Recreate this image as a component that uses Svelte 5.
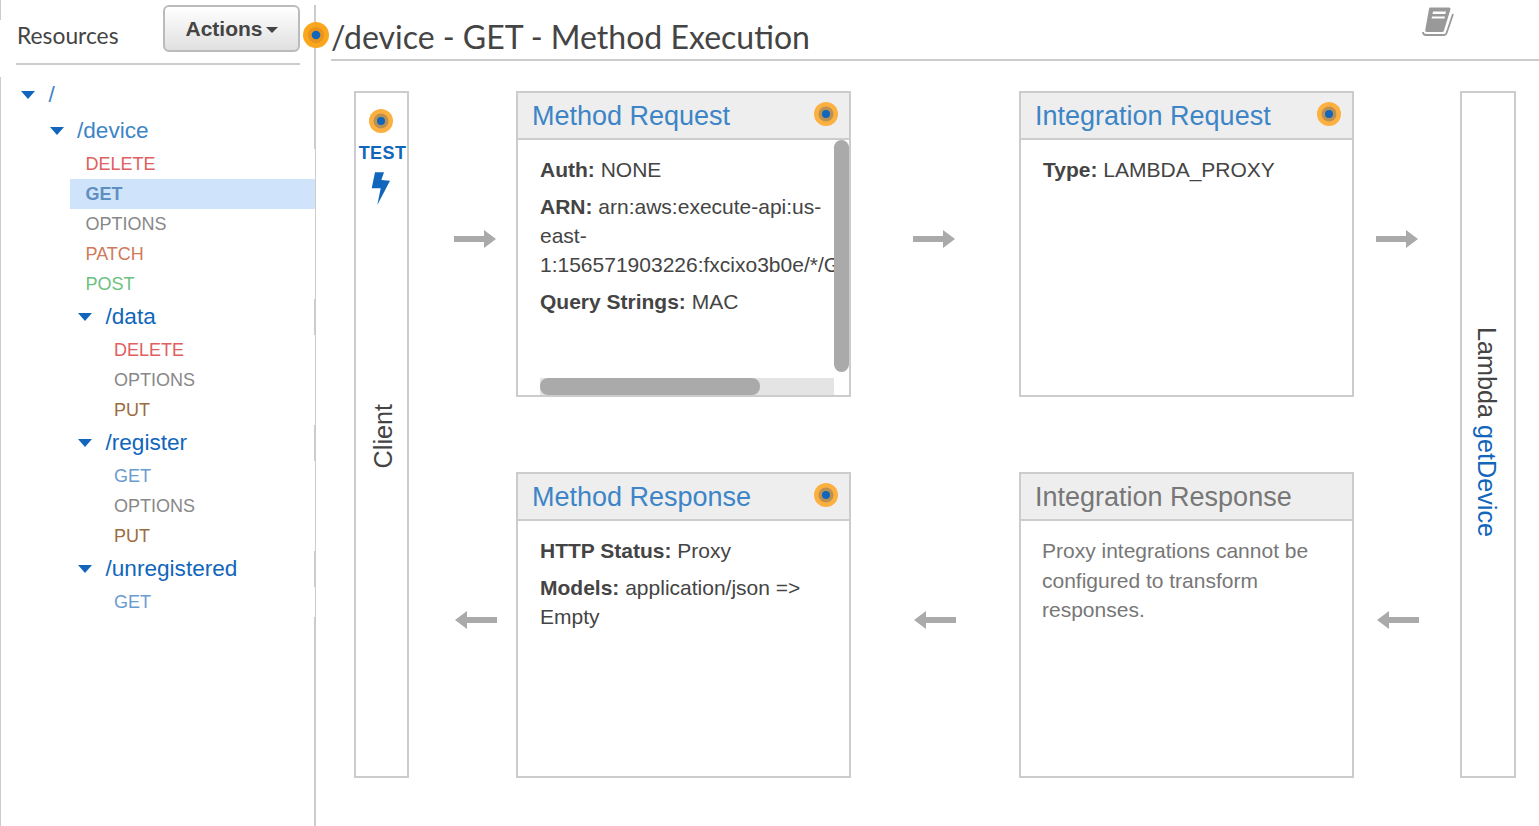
<script>
    const tree = {
        path: "/", light: true,
        children: [{
            path: "/device", light: true,
            methods: [
                { name: "DELETE" },
                { name: "GET", selected: true },
                { name: "OPTIONS" },
                { name: "PATCH" },
                { name: "POST" }
            ],
            children: [
                { path: "/data", methods: [{ name: "DELETE" }, { name: "OPTIONS" }, { name: "PUT" }] },
                { path: "/register", methods: [{ name: "GET" }, { name: "OPTIONS" }, { name: "PUT" }] },
                { path: "/unregistered", methods: [{ name: "GET" }] }
            ]
        }]
    }
</script>

{#snippet dot(size, hot = false)}
    <svg class="dot" width={size} height={size} viewBox="0 0 24 24">
        <circle cx="12" cy="12" r="12" fill={hot ? "#fba61f" : "#fbb040"} />
        <circle cx="12" cy="12" r="7.5" fill={hot ? "#e8951e" : "#bb9153"} />
        <circle cx="12" cy="12" r="4" fill="#1166bb" />
    </svg>
{/snippet}

{#snippet arrow(left)}
    <svg class="arrow" class:left width="42" height="18" viewBox="0 0 42 18">
        <path d="M0 6H30V0L42 9L30 18V12H0Z" fill="#aaa" />
    </svg>
{/snippet}

{#snippet resource(node)}
    <li>
        <div class="node" class:light={node.light}>
            <svg class="caret" width="14" height="8" viewBox="0 0 14 8"><path d="M0 0H14L7 8Z" fill="#1166bb" /></svg>
            <span>{node.path}</span>
        </div>
        <ul class="nested">
            {#each node.methods ?? [] as m}
                <li class="method {m.name.toLowerCase()}" class:selected={m.selected}>{m.name}</li>
            {/each}
            {#each node.children ?? [] as child}
                {@render resource(child)}
            {/each}
        </ul>
    </li>
{/snippet}

<div class="page">
    <aside class="sidebar">
        <header class="side-head">
            <span class="side-title">Resources</span>
            <button class="actions">Actions<i class="btn-caret"></i></button>
        </header>
        <ul class="tree">
            {@render resource(tree)}
        </ul>
    </aside>

    <div class="head-dot">{@render dot(26, true)}</div>

    <main class="main">
        <header class="main-head">
            <h1>/device - GET - Method Execution</h1>
            <svg class="book" width="32" height="30" viewBox="0 0 32 30">
                <path d="M8 1.5H27Q29 1.5 28.4 3.5L22 24.5Q21.6 26 20 26H5Q2.5 26 3.5 22.5L7 3Q7.2 1.5 8 1.5Z" fill="#999" />
                <path d="M11 5.5H24L23.4 8H10.5ZM10 10.5H23L22.4 12.6H9.6Z" fill="#fff" />
                <path d="M31 8L24.6 27Q24 29 22 29H4Q1 29 1 26" fill="none" stroke="#999" stroke-width="1.8" />
            </svg>
        </header>

        <div class="diagram">
            <section class="side-box client">
                <div class="test">
                    {@render dot(24)}
                    <span class="test-label">TEST</span>
                    <svg class="bolt" width="20" height="35" viewBox="0 0 20 35">
                        <path d="M4 1.3H13L10.3 9L19 9.7L6.3 34L9.7 17.3H0.7Z" fill="#1166bb" />
                    </svg>
                </div>
                <span class="vert client-label">Client</span>
            </section>

            <div class="gap g1">{@render arrow(false)}</div>

            <section class="card">
                <div class="card-head">
                    <span class="card-title">Method Request</span>
                    {@render dot(24)}
                </div>
                <div class="card-body scroll">
                    <div class="scroll-content">
                        <p><b>Auth:</b> NONE</p>
                        <p><b>ARN:</b> arn:aws:execute-api:us-east-1:156571903226:fxcixo3b0e/*/GET/device</p>
                        <p><b>Query Strings:</b> MAC</p>
                    </div>
                    <div class="track-h"><div class="thumb-h"></div></div>
                    <div class="thumb-v"></div>
                </div>
            </section>

            <div class="gap g2">{@render arrow(false)}</div>

            <section class="card">
                <div class="card-head">
                    <span class="card-title">Integration Request</span>
                    {@render dot(24)}
                </div>
                <div class="card-body">
                    <p><b>Type:</b> LAMBDA_PROXY</p>
                </div>
            </section>

            <div class="gap g3">{@render arrow(false)}</div>

            <section class="side-box lambda">
                <span class="vert lambda-label">Lambda <span class="fn">getDevice</span></span>
            </section>

            <div class="gap g1b">{@render arrow(true)}</div>

            <section class="card second">
                <div class="card-head">
                    <span class="card-title">Method Response</span>
                    {@render dot(24)}
                </div>
                <div class="card-body">
                    <p><b>HTTP Status:</b> Proxy</p>
                    <p><b>Models:</b> application/json =&gt; Empty</p>
                </div>
            </section>

            <div class="gap g2b">{@render arrow(true)}</div>

            <section class="card second">
                <div class="card-head">
                    <span class="card-title muted">Integration Response</span>
                </div>
                <div class="card-body note">
                    Proxy integrations cannot be configured to transform responses.
                </div>
            </section>

            <div class="gap g3b">{@render arrow(true)}</div>
        </div>
    </main>
</div>

<style>
    :global(body) {
        background: #fff;
        font-family: "Liberation Sans", Arial, sans-serif;
        color: #444;
    }

    .page {
        position: relative;
        display: flex;
        height: 826px;
        overflow: hidden;
    }

    /* the divider lines of the panel are broken into segments */
    .sidebar {
        width: 316px;
        height: 826px;
        flex: none;
        background:
            linear-gradient(#ccc, #ccc) 0 0 / 1px 20px no-repeat,
            linear-gradient(#ccc, #ccc) 315px 5px / 1px 821px no-repeat,
            linear-gradient(#ccc, #ccc) 314px 5px / 1px 144px no-repeat,
            linear-gradient(#ccc, #ccc) 314px 617px / 1px 209px no-repeat;
    }

    .side-head {
        display: flex;
        align-items: flex-start;
        justify-content: space-between;
        box-sizing: border-box;
        height: 65px;
        margin: 0 16px 0 16px;
        padding-top: 5px;
        border-bottom: 2px solid #ccc;
    }

    .side-title {
        margin-top: 14px;
        margin-left: 1px;
        font-family: Lato, sans-serif;
        font-size: 22.8px;
        line-height: 32px;
    }

    .actions {
        width: 137px;
        height: 47px;
        padding: 0;
        border: 2px solid #bbb;
        border-radius: 6px;
        background: linear-gradient(#fff, #e0e0e0);
        color: #444;
        font-family: "Liberation Sans", Arial, sans-serif;
        font-size: 21px;
        font-weight: bold;
    }

    .btn-caret {
        display: inline-block;
        margin-left: 3px;
        vertical-align: middle;
        border-top: 6px solid #444;
        border-left: 6px solid transparent;
        border-right: 6px solid transparent;
    }

    ul {
        list-style: none;
        margin: 0;
        padding: 0;
    }

    .tree {
        box-sizing: border-box;
        width: 315px;
        height: 749px;
        margin-top: 12px;
        padding-left: 20px;
        border-left: 1px solid #ccc;
    }

    .node {
        display: flex;
        align-items: center;
        height: 36px;
        font-size: 22.6px;
        color: #1166bb;
        border-right: 1px solid #ccc;
    }

    .node.light {
        color: #3d85c6;
        border-right: none;
    }

    .caret {
        flex: none;
        margin-right: 13.5px;
    }

    .nested {
        padding-left: 28.5px;
    }

    .method {
        height: 30px;
        line-height: 30px;
        margin-left: -8px;
        padding-left: 15.5px;
        font-size: 18px;
        color: #888;
    }

    .method.delete { color: #e0605f; }
    .method.get { color: #6a9bcf; }
    .method.patch { color: #d0795a; }
    .method.post { color: #6dbf7f; }
    .method.put { color: #9c6b3e; }

    .method.selected {
        background: #cfe4fb;
        color: #5f8fc0;
        font-weight: bold;
    }

    .head-dot {
        position: absolute;
        left: 303px;
        top: 22px;
        line-height: 0;
    }

    .dot {
        display: block;
        flex: none;
    }

    .main {
        flex: 1;
        min-width: 0;
    }

    .main-head {
        display: flex;
        align-items: flex-start;
        justify-content: space-between;
        box-sizing: border-box;
        height: 61px;
        margin-left: 15px;
        padding-right: 85px;
        border-bottom: 2px solid #ccc;
    }

    h1 {
        margin: 14px 0 0;
        font-family: Lato, sans-serif;
        font-size: 32px;
        font-weight: 400;
        line-height: 46px;
        color: #444;
    }

    .book {
        margin-top: 6px;
    }

    .diagram {
        display: grid;
        grid-template-columns: 55px 107px 335px 168px 335px 106px 56px;
        grid-template-rows: 306px 75px 306px;
        margin: 30px 0 0 38px;
    }

    .side-box {
        grid-row: 1 / 4;
        box-sizing: border-box;
        display: flex;
        flex-direction: column;
        align-items: center;
        justify-content: center;
        border: 2px solid #ccc;
    }

    .client {
        position: relative;
        grid-column: 1;
        padding: 4px 0 0 2px;
    }

    .lambda {
        grid-column: 7;
        padding: 0 2px 5px 0;
    }

    .test {
        position: absolute;
        top: 16px;
        left: 0;
        right: 1px;
        display: flex;
        flex-direction: column;
        align-items: center;
    }

    .test-label {
        margin: 9px 0 0 3px;
        font-size: 18px;
        line-height: 22px;
        font-weight: bold;
        letter-spacing: 0.4px;
        color: #1166bb;
    }

    .bolt {
        margin-top: 7px;
    }

    .vert {
        writing-mode: vertical-rl;
        font-size: 25.2px;
        line-height: 30px;
        white-space: nowrap;
    }

    .client-label {
        transform: rotate(180deg);
    }

    .fn {
        color: #1166bb;
    }

    .gap {
        display: flex;
        align-items: flex-start;
        padding-top: 139px;
    }

    .g1 { padding-left: 45px; }
    .g2 { padding-left: 62px; }
    .g3 { padding-left: 22px; }

    .g1b, .g2b, .g3b {
        grid-row: 3;
    }

    .g1b { grid-column: 2; padding-left: 46px; }
    .g2b { grid-column: 4; padding-left: 63px; }
    .g3b { grid-column: 6; padding-left: 23px; }

    .arrow.left {
        transform: scaleX(-1);
    }

    .card {
        display: flex;
        flex-direction: column;
        box-sizing: border-box;
        border: 2px solid #ccc;
    }

    .card.second {
        grid-row: 3;
    }

    .card-head {
        display: flex;
        align-items: center;
        justify-content: space-between;
        box-sizing: border-box;
        height: 47px;
        flex: none;
        padding: 0 11px 3px 14px;
        background: #eee;
        border-bottom: 2px solid #ccc;
    }

    .card-title {
        padding-top: 4px;
        font-size: 27px;
        color: #3d85c6;
    }

    .card-title.muted {
        color: #777;
    }

    .card-body {
        flex: 1;
        min-height: 0;
        padding: 15px 14px 0 22px;
        font-size: 21px;
        line-height: 29px;
    }

    .card-body p {
        margin: 0 0 8px;
    }

    .scroll {
        position: relative;
        padding: 0;
    }

    .scroll-content {
        box-sizing: border-box;
        height: 100%;
        margin-right: 15px;
        padding: 15px 0 0 22px;
        overflow: hidden;
    }

    .track-h {
        position: absolute;
        left: 22px;
        right: 15px;
        bottom: 0;
        height: 17px;
        background: #e4e4e4;
    }

    .thumb-h {
        width: 220px;
        height: 17px;
        border-radius: 8px;
        background: #aaa;
    }

    .thumb-v {
        position: absolute;
        right: 0;
        top: 0;
        width: 15px;
        height: 232px;
        border-radius: 8px;
        background: #aaa;
    }

    .note {
        color: #777;
        line-height: 29.5px;
        padding-left: 21px;
    }
</style>
